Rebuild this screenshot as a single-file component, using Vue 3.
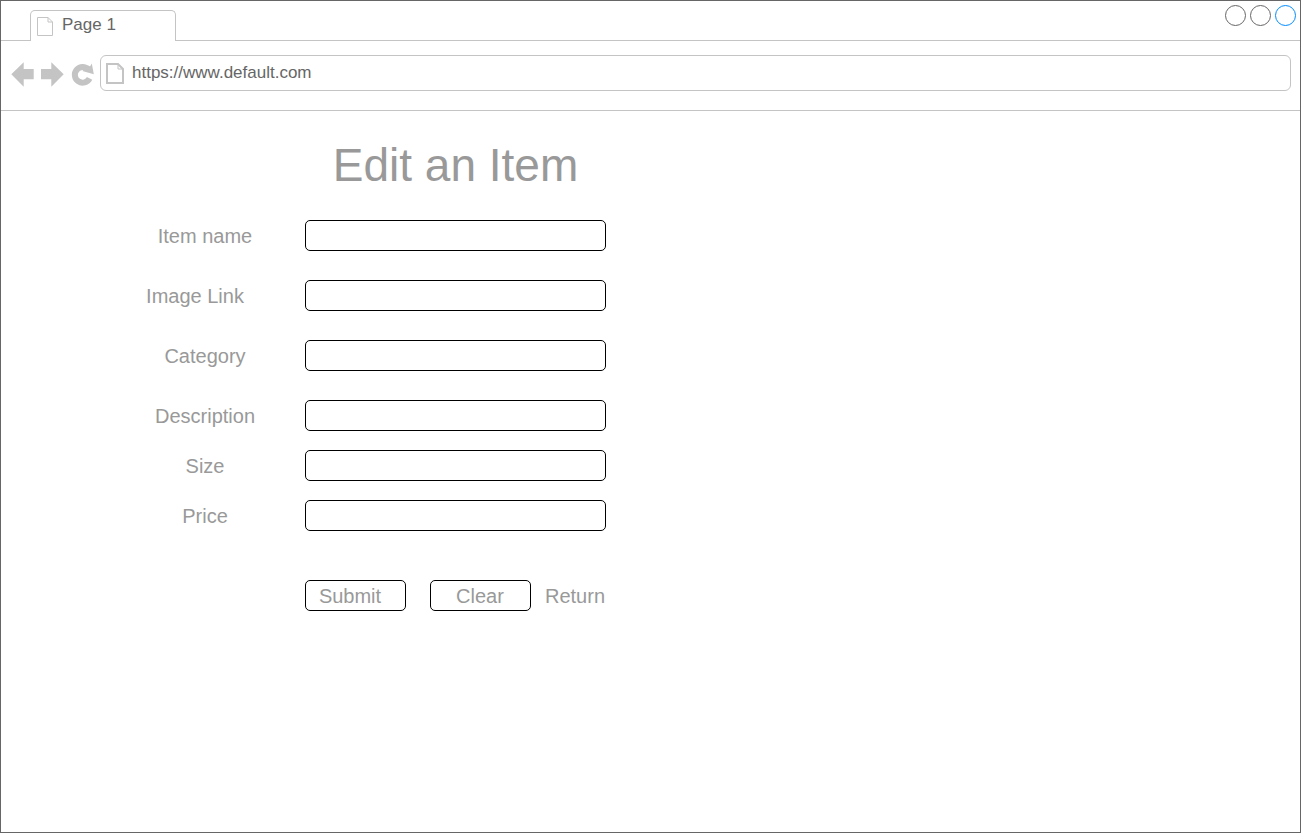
<script setup>
import { ref, reactive } from 'vue'

const url = ref('https://www.default.com')

const fields = [
  { id: 'name', label: 'Item name' },
  { id: 'image', label: 'Image Link', shifted: true },
  { id: 'category', label: 'Category' },
  { id: 'description', label: 'Description' },
  { id: 'size', label: 'Size', tight: true },
  { id: 'price', label: 'Price', tight: true },
]

const item = reactive({
  name: '',
  image: '',
  category: '',
  description: '',
  size: '',
  price: '',
})

function clear() {
  fields.forEach((field) => (item[field.id] = ''))
}
</script>

<template>
  <div class="browser">
    <header class="tab-strip">
      <div class="tab">
        <svg class="tab-icon" width="17" height="20" viewBox="0 0 17 20" aria-hidden="true">
          <path d="M.5 .5H11L15.5 5V18.5H.5Z" />
          <path d="M11 .5V5H15.5" class="fold" />
        </svg>
        <span>Page 1</span>
      </div>
      <div class="window-controls">
        <button type="button" class="dot" aria-label="Minimize"></button>
        <button type="button" class="dot" aria-label="Maximize"></button>
        <button type="button" class="dot close" aria-label="Close"></button>
      </div>
    </header>

    <nav class="toolbar">
      <div class="nav-buttons">
        <button type="button" aria-label="Back">
          <svg width="24" height="28" viewBox="0 0 24 28">
            <path d="M.3 15.3L12.7 3.3V10H22.7V20.3H12.7V27.7Z" />
          </svg>
        </button>
        <button type="button" aria-label="Forward">
          <svg width="24" height="28" viewBox="0 0 24 28">
            <path d="M0 10H10.3V3.3L22.7 15.3L10.3 27.7V20.3H0Z" />
          </svg>
        </button>
        <button type="button" aria-label="Reload">
          <svg width="24" height="28" viewBox="0 0 24 28">
            <path class="arc" d="M18.6 19.4A7.8 7.8 0 1 1 17.4 10.6" />
            <path d="M20.8 4.4L22.8 15.2L11.4 12L17 6.5L19 7.5Z" />
          </svg>
        </button>
      </div>
      <div class="address">
        <svg width="18" height="21" viewBox="0 0 18 21" aria-hidden="true">
          <path d="M1 1H12L17 6V20H1Z" />
          <path d="M12 1V6H17" class="fold" />
        </svg>
        <input v-model="url" type="text" aria-label="Address" />
      </div>
    </nav>

    <main class="page">
      <form class="item-form" @submit.prevent>
        <h1>Edit an Item</h1>
        <div v-for="field in fields" :key="field.id" class="row" :class="{ tight: field.tight }">
          <label :for="field.id" :class="{ shifted: field.shifted }">{{ field.label }}</label>
          <input :id="field.id" v-model="item[field.id]" type="text" />
        </div>
        <div class="actions">
          <button type="submit" class="submit">Submit</button>
          <button type="button" @click="clear">Clear</button>
          <a href="#">Return</a>
        </div>
      </form>
    </main>
  </div>
</template>

<style>
body {
  margin: 0;
  background: #fff;
}
</style>

<style scoped>
.browser,
.browser * {
  box-sizing: border-box;
}

.browser {
  display: flex;
  flex-direction: column;
  min-height: 100vh;
  border: 1px solid #666;
  background: #fff;
  color: #666;
  font-family: "Liberation Sans", Arial, sans-serif;
  font-size: 17px;
}

button,
input {
  font: inherit;
  color: inherit;
  background: none;
  margin: 0;
  padding: 0;
}

svg {
  display: block;
}

.tab-strip {
  display: flex;
  align-items: stretch;
  height: 40px;
}

.tab-strip::before {
  content: "";
  width: 29px;
  border-bottom: 1px solid #c4c4c4;
}

.tab {
  display: flex;
  align-items: flex-start;
  gap: 8px;
  width: 146px;
  margin-top: 9px;
  padding: 5px 6px 0;
  border: 1px solid #c4c4c4;
  border-bottom: 0;
  border-radius: 5px 5px 0 0;
  line-height: 18px;
}

.tab-icon {
  margin-top: 1px;
  fill: none;
  stroke: #c4c4c4;
}

.window-controls {
  flex: 1;
  display: flex;
  justify-content: flex-end;
  gap: 4px;
  padding: 4px 4px 0 0;
  border-bottom: 1px solid #c4c4c4;
}

.dot {
  width: 21px;
  height: 21px;
  border: 1px solid #666;
  border-radius: 50%;
}

.dot.close {
  border-color: #008cff;
}

.toolbar {
  display: flex;
  align-items: center;
  gap: 5px;
  padding: 14px 9px 19px 10px;
  border-bottom: 1px solid #c4c4c4;
}

.nav-buttons {
  display: flex;
  gap: 6px;
}

.nav-buttons button {
  border: 0;
}

.nav-buttons path {
  fill: #c4c4c4;
}

.nav-buttons .arc {
  fill: none;
  stroke: #c4c4c4;
  stroke-width: 6;
}

.address {
  flex: 1;
  display: flex;
  align-items: center;
  gap: 8px;
  height: 36px;
  padding: 0 5px;
  border: 1px solid #c4c4c4;
  border-radius: 6px;
}

.address svg {
  fill: none;
  stroke: #c4c4c4;
  stroke-width: 2;
}

.address .fold {
  stroke-width: 1;
}

.address input {
  flex: 1;
  min-width: 0;
  border: 0;
  outline: 0;
}

.page {
  flex: 1;
  padding: 28px 0 40px 104px;
  color: #999;
  font-size: 20px;
}

.item-form {
  width: 501px;
}

h1 {
  margin: 0 0 0 200px;
  font-size: 46px;
  font-weight: 400;
  line-height: 52px;
  text-align: center;
}

.row {
  display: grid;
  grid-template-columns: 200px 1fr;
  align-items: center;
  margin-top: 29px;
}

.row.tight {
  margin-top: 19px;
}

.row label {
  padding-top: 2px;
  text-align: center;
}

.row label.shifted {
  padding-right: 20px;
}

.row input {
  width: 100%;
  height: 31px;
  padding: 0 8px;
  border: 1px solid #000;
  border-radius: 5px;
}

.actions {
  display: flex;
  align-items: center;
  margin: 49px 0 0 200px;
}

.actions button {
  width: 101px;
  height: 31px;
  margin-right: 24px;
  padding: 2px 1px 0 0;
  border: 1px solid #000;
  border-radius: 5px;
}

.actions .submit {
  padding-right: 11px;
}

.actions button:nth-child(2) {
  margin-right: 14px;
}

.actions a {
  padding-top: 2px;
  color: inherit;
  text-decoration: none;
}
</style>
